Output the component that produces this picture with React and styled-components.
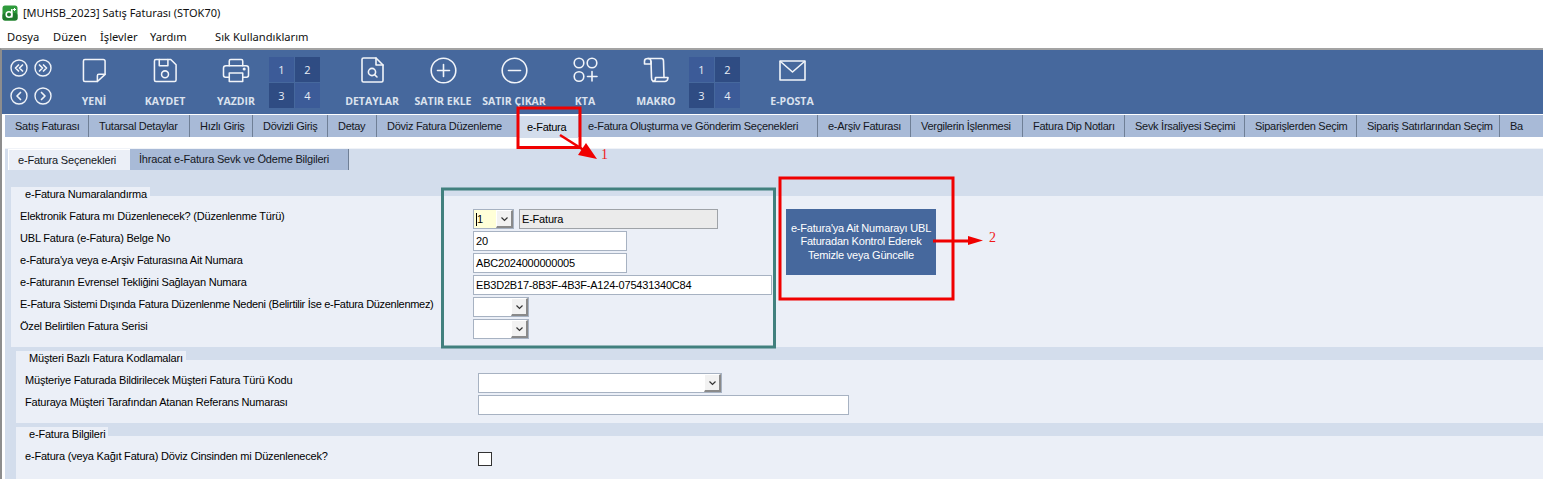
import React from 'react';
import styled, { createGlobalStyle } from 'styled-components';

const Global = createGlobalStyle`
  html, body { margin: 0; padding: 0; background: #fff; overflow: hidden; }
  * { box-sizing: border-box; }
  body { font-family: "Liberation Sans", Arial, sans-serif; font-size: 11px; letter-spacing: -0.2px; color: #000; }
`;

const Page = styled.div`position: relative; width: 1543px; height: 479px; overflow: hidden; background: #fff;`;
const TitleBar = styled.div`display: flex; align-items: center; height: 25px; padding-left: 2px; gap: 5px; letter-spacing: 0;
  font-family: "Noto Sans", sans-serif; font-size: 11px; color: #111;`;
const MenuBar = styled.div`display: flex; height: 23px; align-items: center; padding-left: 7px; letter-spacing: 0;
  font-family: "Noto Sans", sans-serif; font-size: 11.2px; color: #111;`;
const MenuItem = styled.span`flex: none; width: ${p => p.$w}px;`;
const Frame = styled.div`border-top: 2px solid #a3a3a3; border-left: 2px solid #8d8d8d; height: 431px; overflow: hidden;`;
const Toolbar = styled.div`display: flex; gap: 7px; height: 64px; background: #46689d; padding-left: 8px; letter-spacing: 0;`;
const NavGrid = styled.div`display: grid; grid-template-columns: 18px 18px; gap: 10px 6px; width: 45px; margin-top: 9px; align-content: start; color: #eef2f8;`;
const NavBtn = styled.svg`width: 18px; height: 18px; display: block;`;
const Tool = styled.div`width: 64px; display: flex; flex-direction: column; align-items: center; position: relative; padding-top: 5px; flex: none;`;
const IconSlot = styled.div`height: 30px; display: flex; align-items: center; justify-content: center; color: #f1f4f9;`;
const ToolLabel = styled.div`position: absolute; top: 44px; white-space: nowrap; font-family: "Open Sans", sans-serif; font-weight: 700; font-size: 10.5px; color: #dbe2ee;`;
const Pad = styled.div`display: grid; grid-template-columns: 25px 25px; grid-auto-rows: 25px; gap: 1px; margin: 7px 13px 0 -6px; flex: none;`;
const PadKey = styled.div`display: flex; align-items: center; justify-content: center; color: #e8edf5; font-family: "Open Sans", sans-serif; font-size: 11px;
  background: ${p => p.$dark ? '#2f4c83' : '#3c5b98'};`;
const TabStrip = styled.div`display: flex; height: 23px; margin-top: 1px; padding-left: 3px; background: #fff;`;
const Tab = styled.div`flex: none; width: ${p => p.$w}px; display: flex; align-items: center; padding: 0 0 1px 10px; height: 22px; white-space: nowrap; overflow: hidden;
  background: #a8bad7; color: #14171d; letter-spacing: -0.28px;
  ${p => p.$sep ? 'border-right: 1px solid #6f7f96;' : ''}
  ${p => p.$active ? 'background: #d3ddec; border-top: 1px solid #fff; height: 23px; color: #000;' : ''}
`;
const Content = styled.div`background: #d3ddec; height: 342px; margin-left: 3px; margin-top: -1px;`;
const SubRule = styled.div`height: 1px; background: #f0f3f8; margin-top: 11px;`;
const SubTabs = styled.div`display: flex; height: 21px; padding-left: 3px;`;
const SubTab = styled.div`flex: none; width: ${p => p.$w}px; display: flex; align-items: center; padding: 0 0 1px 9px; color: #14171d;
  background: ${p => p.$active ? '#ebeff7' : '#a8bad7'};
  ${p => p.$active ? 'border-top: 1px solid #fff; border-left: 1px solid #fff;' : 'border-right: 1px solid #6f7f96;'}
`;
const SectionWrap = styled.div`margin-left: ${p => p.$x}px; margin-top: ${p => p.$top}px;`;
const Legend = styled.div`width: fit-content; height: 9px; line-height: 15px; background: #ebeff7; padding-left: ${p => p.$pad}px; padding-right: 3px; white-space: nowrap;`;
const Panel = styled.div`background: #ebeff7; height: ${p => p.$h}px; padding: 13px 0 0 9px; display: flex; align-items: flex-start;`;
const FormGrid = styled.div`display: grid; grid-template-columns: 453px auto; grid-auto-rows: 20px; row-gap: 2px; justify-content: start;`;
const Label = styled.div`display: flex; align-items: center; height: 14px; white-space: nowrap; letter-spacing: ${p => p.$tight ? -0.3 : -0.2}px;`;
const Field = styled.div`display: flex; gap: 5px;`;
const TextBox = styled.div`width: ${p => p.$w}px; height: 20px; background: ${p => p.$readonly ? '#ebebeb' : '#fff'}; border: 1px solid ${p => p.$readonly ? '#9fa3a8' : '#a7b2c2'};
  display: flex; align-items: center; padding: 0 0 1px 2px; white-space: nowrap;`;
const Combo = styled(TextBox)`padding: 0 0 0 2px; justify-content: space-between; background: ${p => p.$fill || '#fff'};`;
const Caret = styled.span`border-left: 1px solid #000; padding-left: 0; line-height: 13px;`;
const ComboBtn = styled.div`width: 17px; height: 18px; background: #f2f2f2; display: flex; align-items: center; justify-content: center;
  border-right: 2px solid #8a8a8a; border-bottom: 2px solid #8a8a8a; border-top: 1px solid #fff; border-left: 1px solid #fff; flex: none;`;
const Check = styled.div`width: 14px; height: 14px; border: 1px solid #333; background: #fff; margin-top: 3px;`;
const ActionButton = styled.div`flex: none; width: 150px; height: 66px; margin: 0 0 0 14px; background: #46689d; color: #fff; line-height: 13.5px; text-align: center; white-space: nowrap;
  display: flex; align-items: center; justify-content: center;`;
const Overlay = styled.svg`position: absolute; left: 0; top: 0; pointer-events: none;`;
const Mark = styled.span`position: absolute; left: ${p => p.$x}px; top: ${p => p.$y}px; color: #f01818; font-family: "Liberation Serif", serif; font-size: 14px; line-height: 14px;`;

const Chevron = () => (
  <svg width="9" height="6" viewBox="0 0 9 6"><path d="M1.5 1.5 L4.5 4.5 L7.5 1.5" fill="none" stroke="#333" strokeWidth="1.2" /></svg>
);

const Nav = ({ d }) => (
  <NavBtn viewBox="0 0 18 18" fill="none" stroke="currentColor">
    <circle cx="9" cy="9" r="8" strokeWidth="1.4" />
    <path d={d} strokeWidth="1.7" strokeLinecap="round" strokeLinejoin="round" />
  </NavBtn>
);

const sw = { fill: 'none', stroke: 'currentColor', strokeWidth: 1.6, strokeLinejoin: 'round', strokeLinecap: 'round' };

const icons = {
  yeni: <svg width="25" height="25" viewBox="0 0 26 26" {...sw}><path d="M3 1.5 H22 Q24 1.5 24 3.5 V17 L16 24.5 H3 Q1.5 24.5 1.5 23 V3 Q1.5 1.5 3 1.5Z" /><path d="M24 17 H17.5 Q16 17 16 18.5 V24.5" /></svg>,
  kaydet: <svg width="25" height="25" viewBox="0 0 25 26" {...sw}><path d="M2.5 1.5 H18 L23.5 7 V23 Q23.5 24.5 22 24.5 H2.5 Q1 24.5 1 23 V3 Q1 1.5 2.5 1.5Z" /><path d="M6 1.5 V8 H15 V1.5" /><circle cx="12" cy="17" r="3.6" /></svg>,
  yazdir: <svg width="28" height="25" viewBox="0 0 28 26" {...sw}><path d="M7 8 V3 Q7 1.5 8.5 1.5 H19.5 Q21 1.5 21 3 V8" /><path d="M7 20 H3 Q1 20 1 18 V10.5 Q1 8 3.5 8 H24.5 Q27 8 27 10.5 V18 Q27 20 25 20 H21" /><path d="M7 15.5 H21 V24.5 H7Z" /><circle cx="22.5" cy="11.5" r="0.8" fill="currentColor" /></svg>,
  detay: <svg width="23" height="26" viewBox="0 0 23 26" {...sw}><path d="M2.5 1 H15 L22 8 V23.5 Q22 25 20.5 25 H2.5 Q1 25 1 23.5 V2.5 Q1 1 2.5 1Z" /><path d="M15 1 V8 H22" /><circle cx="11" cy="15" r="3.6" /><path d="M13.6 17.6 L16 20" /></svg>,
  ekle: <svg width="27" height="27" viewBox="0 0 27 27" {...sw}><circle cx="13.5" cy="13.5" r="12.3" /><path d="M13.5 7.5 V19.5 M7.5 13.5 H19.5" /></svg>,
  cikar: <svg width="27" height="27" viewBox="0 0 27 27" {...sw}><circle cx="13.5" cy="13.5" r="12.3" /><path d="M7.5 13.5 H19.5" /></svg>,
  kta: <svg width="25" height="26" viewBox="0 0 25 26" {...sw}><circle cx="6" cy="6" r="4.8" /><circle cx="19" cy="6" r="4.8" /><circle cx="6" cy="19.5" r="4.8" /><path d="M19 14.5 V24 M14.5 19.5 H24" /></svg>,
  makro: <svg width="26" height="26" viewBox="0 0 26 26" {...sw}><path d="M5 1.5 H18.5 Q20.5 1.5 20.5 4 L21 20.5" /><path d="M8 4.5 L8.5 20.5 Q8.5 24.5 12 24.5 H22 Q25 24 25 20.5 H12.5 Q12.8 24 10 24.5" /><path d="M1.5 7 V4 Q1.5 1.5 5 1.5 Q8 1.5 8 4.5 V7 H1.5Z" /></svg>,
  eposta: <svg width="27" height="21" viewBox="0 0 27 21" {...sw}><rect x="1" y="1" width="25" height="19" /><path d="M1.5 1.5 L13.5 12 L25.5 1.5" /></svg>,
};

const tabs = [
  ['Satış Faturası', 84, true], ['Tutarsal Detaylar', 101, true], ['Hızlı Giriş', 63, true], ['Dövizli Giriş', 75, true],
  ['Detay', 49, true], ['Döviz Fatura Düzenleme', 140, false], ['e-Fatura', 61, false, true],
  ['e-Fatura Oluşturma ve Gönderim Seçenekleri', 240, true], ['e-Arşiv Faturası', 93, true], ['Vergilerin İşlenmesi', 112, true],
  ['Fatura Dip Notları', 102, true], ['Sevk İrsaliyesi Seçimi', 120, true], ['Siparişlerden Seçim', 112, true],
  ['Sipariş Satırlarından Seçim', 143, true], ['Ba', 60, false],
];

const Pads = () => (
  <Pad>
    <PadKey>1</PadKey><PadKey $dark>2</PadKey><PadKey $dark>3</PadKey><PadKey>4</PadKey>
  </Pad>
);

const ToolItem = ({ icon, label }) => (
  <Tool><IconSlot>{icons[icon]}</IconSlot><ToolLabel>{label}</ToolLabel></Tool>
);

export default function App() {
  return (
    <Page>
      <Global />
      <TitleBar>
        <svg width="16" height="16" viewBox="0 0 16 16">
          <rect x="0.5" y="0.5" width="15" height="15" rx="2.5" fill="#2f9a3c" />
          <rect x="0.5" y="8" width="15" height="7.5" rx="2.5" fill="#1f7a2c" />
          <circle cx="7" cy="9.5" r="2.8" fill="none" stroke="#fff" strokeWidth="1.6" />
          <path d="M9.8 4 V12.5" stroke="#fff" strokeWidth="1.6" />
          <path d="M12.5 3 V6 M11 4.5 H14" stroke="#fff" strokeWidth="1" />
        </svg>
        <span>[MUHSB_2023] Satış Faturası (STOK70)</span>
      </TitleBar>
      <MenuBar>
        <MenuItem $w={46}>Dosya</MenuItem>
        <MenuItem $w={47}>Düzen</MenuItem>
        <MenuItem $w={50}>İşlevler</MenuItem>
        <MenuItem $w={65}>Yardım</MenuItem>
        <MenuItem $w={110}>Sık Kullandıklarım</MenuItem>
      </MenuBar>
      <Frame>
        <Toolbar>
          <NavGrid>
            <Nav d="M8.5 6 L5.5 9 L8.5 12 M12.5 6 L9.5 9 L12.5 12" />
            <Nav d="M5.5 6 L8.5 9 L5.5 12 M9.5 6 L12.5 9 L9.5 12" />
            <Nav d="M10.5 5.5 L7 9 L10.5 12.5" />
            <Nav d="M7.5 5.5 L11 9 L7.5 12.5" />
          </NavGrid>
          <ToolItem icon="yeni" label="YENİ" />
          <ToolItem icon="kaydet" label="KAYDET" />
          <ToolItem icon="yazdir" label="YAZDIR" />
          <Pads />
          <ToolItem icon="detay" label="DETAYLAR" />
          <ToolItem icon="ekle" label="SATIR EKLE" />
          <ToolItem icon="cikar" label="SATIR ÇIKAR" />
          <ToolItem icon="kta" label="KTA" />
          <ToolItem icon="makro" label="MAKRO" />
          <Pads />
          <ToolItem icon="eposta" label="E-POSTA" />
        </Toolbar>
        <TabStrip>
          {tabs.map(([t, w, sep, active]) => (
            <Tab key={t} $w={w} $sep={sep} $active={active}>{t}</Tab>
          ))}
        </TabStrip>
        <Content>
          <SubRule />
          <SubTabs>
            <SubTab $active $w={122}>e-Fatura Seçenekleri</SubTab>
            <SubTab $w={219}>İhracat e-Fatura Sevk ve Ödeme Bilgileri</SubTab>
          </SubTabs>
          <SectionWrap $x={6} $top={17}>
            <Legend $pad={14}>e-Fatura Numaralandırma</Legend>
            <Panel $h={151}>
              <FormGrid>
                <Label>Elektronik Fatura mı Düzenlenecek? (Düzenlenme Türü)</Label>
                <Field>
                  <Combo $w={41} $fill="linear-gradient(90deg,#ffffd8 0 24px,#fff 24px)"><Caret>1</Caret><ComboBtn><Chevron /></ComboBtn></Combo>
                  <TextBox $w={199} $readonly>E-Fatura</TextBox>
                </Field>
                <Label>UBL Fatura (e-Fatura) Belge No</Label>
                <TextBox $w={154}>20</TextBox>
                <Label>e-Fatura'ya veya e-Arşiv Faturasına Ait Numara</Label>
                <TextBox $w={154}>ABC2024000000005</TextBox>
                <Label>e-Faturanın Evrensel Tekliğini Sağlayan Numara</Label>
                <TextBox $w={299}>EB3D2B17-8B3F-4B3F-A124-075431340C84</TextBox>
                <Label $tight>E-Fatura Sistemi Dışında Fatura Düzenlenme Nedeni (Belirtilir İse e-Fatura Düzenlenmez)</Label>
                <Combo $w={56}><span /><ComboBtn><Chevron /></ComboBtn></Combo>
                <Label>Özel Belirtilen Fatura Serisi</Label>
                <Combo $w={56}><span /><ComboBtn><Chevron /></ComboBtn></Combo>
              </FormGrid>
              <ActionButton>e-Fatura'ya Ait Numarayı UBL<br />Faturadan Kontrol Ederek<br />Temizle veya Güncelle</ActionButton>
            </Panel>
          </SectionWrap>
          <SectionWrap $x={11} $top={4}>
            <Legend $pad={13}>Müşteri Bazlı Fatura Kodlamaları</Legend>
            <Panel $h={63}>
              <FormGrid>
                <Label>Müşteriye Faturada Bildirilecek Müşteri Fatura Türü Kodu</Label>
                <Combo $w={244}><span /><ComboBtn><Chevron /></ComboBtn></Combo>
                <Label>Faturaya Müşteri Tarafından Atanan Referans Numarası</Label>
                <TextBox $w={371} />
              </FormGrid>
            </Panel>
          </SectionWrap>
          <SectionWrap $x={11} $top={4}>
            <Legend $pad={13}>e-Fatura Bilgileri</Legend>
            <Panel $h={50}>
              <FormGrid>
                <Label>e-Fatura (veya Kağıt Fatura) Döviz Cinsinden mi Düzenlenecek?</Label>
                <Check />
              </FormGrid>
            </Panel>
          </SectionWrap>
        </Content>
      </Frame>
      <Overlay width="1543" height="479" viewBox="0 0 1543 479">
        <rect x="518" y="108" width="62" height="39.5" fill="none" stroke="#f00000" strokeWidth="3" />
        <path d="M560 135 L590 154" stroke="#f00000" strokeWidth="2.6" />
        <path d="M597 159 L578 155 L586 143Z" fill="#f00000" />
        <rect x="442.5" y="189" width="332" height="158" fill="none" stroke="#41807e" strokeWidth="3" />
        <rect x="780" y="178" width="173" height="121" fill="none" stroke="#f00000" strokeWidth="3" />
        <path d="M933 241 H972" stroke="#f00000" strokeWidth="3" />
        <path d="M983 240.5 L968 236 V245Z" fill="#f00000" />
      </Overlay>
      <Mark $x={601} $y={148}>1</Mark>
      <Mark $x={989} $y={231}>2</Mark>
    </Page>
  );
}
